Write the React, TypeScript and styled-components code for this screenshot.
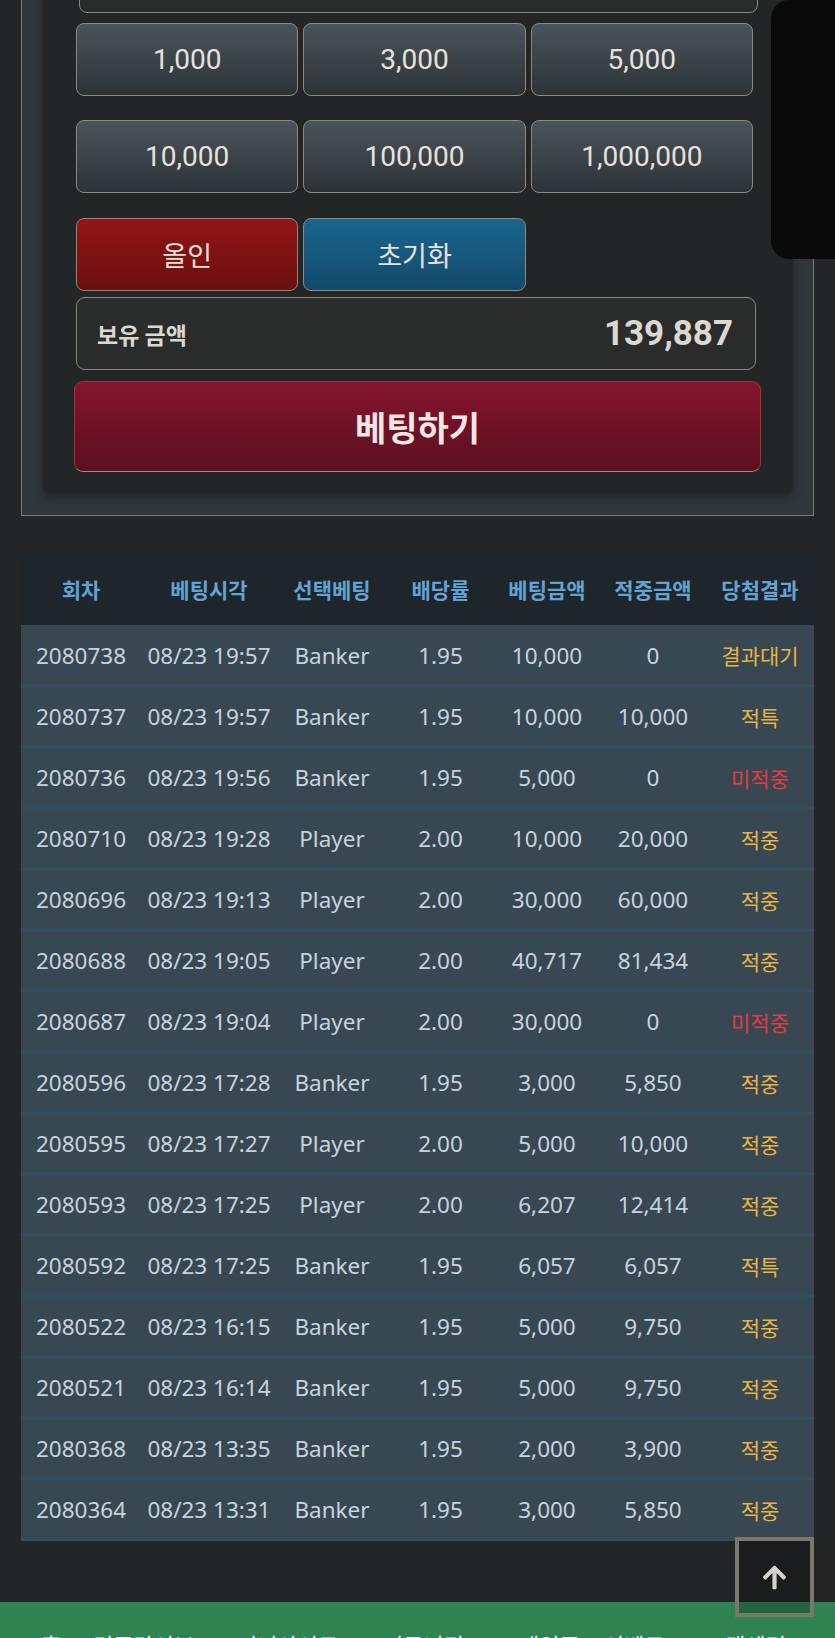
import React from "react";
import styled, { createGlobalStyle } from "styled-components";
import { FaArrowUp } from "react-icons/fa";

const GlobalStyle = createGlobalStyle`
  html, body {
    margin: 0;
    padding: 0;
    background: #232526;
  }
  * {
    box-sizing: border-box;
  }
`;

const Viewport = styled.div`
  position: relative;
  width: 835px;
  height: 1638px;
  overflow: hidden;
  background: #232526;
  font-family: "Roboto", "Noto Sans CJK KR", sans-serif;
`;

const Page = styled.div`
  margin-top: -86px;
  display: flex;
  flex-direction: column;
`;

const Frame = styled.section`
  margin-left: 21px;
  width: 793px;
  border: 1.5px solid #7f7b72;
  background: #30373a;
  padding: 21px 20px 22px 21px;
`;

const Panel = styled.div`
  background: #232627;
  border-radius: 6px;
  box-shadow: 0 4px 10px rgba(0, 0, 0, 0.35);
  padding: 21px 37px 21px 33px;
  display: flex;
  flex-direction: column;
`;

const AmountInput = styled.div`
  margin-left: 3px;
  width: 679px;
  height: 56px;
  border: 1.5px solid #8d877b;
  border-radius: 8px;
  background: #282a2b;
`;

const ChipGrid = styled.div<{ $mt: number }>`
  margin-top: ${(p) => p.$mt}px;
  width: 677px;
  display: grid;
  grid-template-columns: repeat(3, 1fr);
  column-gap: 5px;
  row-gap: 24px;
`;

const tones = {
  grey: "linear-gradient(180deg, #4a545b 0%, #2c3337 100%)",
  red: "linear-gradient(180deg, #921515 0%, #6c0f0f 100%)",
  blue: "linear-gradient(180deg, #1b658e 0%, #124a6b 100%)",
};

const ChipButton = styled.button<{ $tone: keyof typeof tones }>`
  height: 73px;
  border: 1.5px solid #8f897c;
  border-radius: 8px;
  background: ${(p) => tones[p.$tone]};
  color: #e6e2da;
  font-family: "Roboto", "Noto Sans CJK KR", sans-serif;
  font-size: ${(p) => (p.$tone === "grey" ? 28 : 27)}px;
  font-weight: 400;
  display: flex;
  align-items: center;
  justify-content: center;
  padding: 0;
`;

const BalanceBox = styled.div`
  margin-top: 6px;
  width: 680px;
  height: 73px;
  border: 1.5px solid #8d877b;
  border-radius: 9px;
  background: #2a2c2c;
  display: flex;
  align-items: center;
  justify-content: space-between;
  padding: 0 22px 0 20px;
  color: #ddd8cf;
`;

const BalanceLabel = styled.span`
  font-family: "Noto Sans CJK KR", sans-serif;
  font-size: 23px;
  font-weight: 700;
`;

const BalanceValue = styled.span`
  font-family: "Roboto", sans-serif;
  font-size: 35px;
  font-weight: 700;
`;

const BetButton = styled.button`
  margin-top: 11px;
  margin-left: -2px;
  width: 687px;
  height: 91px;
  border: 1.5px solid #a23036;
  border-bottom-color: #a08a84;
  border-radius: 9px;
  background: linear-gradient(180deg, #86142d 0%, #5b0f1f 100%);
  color: #f0e6e6;
  font-family: "Noto Sans CJK KR", sans-serif;
  font-size: 34px;
  font-weight: 700;
  padding: 0;
`;

const Overlay = styled.div`
  position: absolute;
  top: 0;
  right: 0;
  width: 64px;
  height: 259px;
  background: #0a0a0a;
  border-radius: 18px 0 0 18px;
`;

const HistoryTable = styled.table`
  margin: 37px 0 0 21px;
  width: 793px;
  border-collapse: collapse;
  table-layout: fixed;
  font-family: "Noto Sans", "Noto Sans CJK KR", sans-serif;
`;

const Col = styled.col<{ $w: number }>`
  width: ${(p) => p.$w}px;
`;

const HeadCell = styled.th`
  height: 72px;
  background: #1e252b;
  color: #63a3d4;
  font-family: "Noto Sans CJK KR", sans-serif;
  font-size: 21px;
  font-weight: 700;
  text-align: center;
  padding: 0;
`;

const Row = styled.tr`
  background: #384852;
  border-bottom: 2px solid #2e5265;
`;

const Cell = styled.td`
  height: 61px;
  padding: 0;
  text-align: center;
  color: #c6d3dc;
  font-size: 22.5px;
  white-space: nowrap;
`;

const resultColors = {
  wait: "#e9b444",
  hit: "#e9b444",
  miss: "#e23c3c",
};

const ResultCell = styled(Cell)<{ $kind: keyof typeof resultColors }>`
  color: ${(p) => resultColors[p.$kind]};
  font-family: "Noto Sans CJK KR", sans-serif;
  font-size: 21px;
`;

const Footer = styled.nav`
  margin-top: 61px;
  background: #2e8350;
  height: 80px;
  display: flex;
  padding: 26px 0 0 41px;
  font-family: "Noto Sans CJK KR", sans-serif;
  font-size: 22px;
  color: #e8eee9;
`;

const FooterLink = styled.span<{ $w: number }>`
  width: ${(p) => p.$w}px;
  white-space: nowrap;
`;

const TopButton = styled.button`
  position: absolute;
  right: 21px;
  bottom: 21px;
  width: 79px;
  height: 80px;
  border: 4px solid #7b776d;
  background: rgba(0, 0, 0, 0.22);
  color: #d6d2c8;
  font-size: 27px;
  display: flex;
  align-items: center;
  justify-content: center;
  padding: 0;
`;

const chips = ["1,000", "3,000", "5,000", "10,000", "100,000", "1,000,000"];

type Kind = "wait" | "hit" | "miss";

const rows: [string, string, string, string, string, string, string, Kind][] = [
  ["2080738", "08/23 19:57", "Banker", "1.95", "10,000", "0", "결과대기", "wait"],
  ["2080737", "08/23 19:57", "Banker", "1.95", "10,000", "10,000", "적특", "hit"],
  ["2080736", "08/23 19:56", "Banker", "1.95", "5,000", "0", "미적중", "miss"],
  ["2080710", "08/23 19:28", "Player", "2.00", "10,000", "20,000", "적중", "hit"],
  ["2080696", "08/23 19:13", "Player", "2.00", "30,000", "60,000", "적중", "hit"],
  ["2080688", "08/23 19:05", "Player", "2.00", "40,717", "81,434", "적중", "hit"],
  ["2080687", "08/23 19:04", "Player", "2.00", "30,000", "0", "미적중", "miss"],
  ["2080596", "08/23 17:28", "Banker", "1.95", "3,000", "5,850", "적중", "hit"],
  ["2080595", "08/23 17:27", "Player", "2.00", "5,000", "10,000", "적중", "hit"],
  ["2080593", "08/23 17:25", "Player", "2.00", "6,207", "12,414", "적중", "hit"],
  ["2080592", "08/23 17:25", "Banker", "1.95", "6,057", "6,057", "적특", "hit"],
  ["2080522", "08/23 16:15", "Banker", "1.95", "5,000", "9,750", "적중", "hit"],
  ["2080521", "08/23 16:14", "Banker", "1.95", "5,000", "9,750", "적중", "hit"],
  ["2080368", "08/23 13:35", "Banker", "1.95", "2,000", "3,900", "적중", "hit"],
  ["2080364", "08/23 13:31", "Banker", "1.95", "3,000", "5,850", "적중", "hit"],
];

const headers = ["회차", "베팅시각", "선택베팅", "배당률", "베팅금액", "적중금액", "당첨결과"];
const colWidths = [120, 136, 110, 107, 106, 106, 108];

const footerLinks: [string, number][] = [
  ["홈", 52],
  ["경주라이브", 144],
  ["미니사이트", 146],
  ["커뮤니티", 136],
  ["게임존", 85],
  ["이벤트", 101],
  ["고객센터", 100],
];

export default function App() {
  return (
    <Viewport>
      <GlobalStyle />
      <Page>
        <Frame>
          <Panel>
            <AmountInput />
            <ChipGrid $mt={10}>
              {chips.map((c) => (
                <ChipButton key={c} $tone="grey">
                  {c}
                </ChipButton>
              ))}
            </ChipGrid>
            <ChipGrid $mt={25}>
              <ChipButton $tone="red">올인</ChipButton>
              <ChipButton $tone="blue">초기화</ChipButton>
            </ChipGrid>
            <BalanceBox>
              <BalanceLabel>보유 금액</BalanceLabel>
              <BalanceValue>139,887</BalanceValue>
            </BalanceBox>
            <BetButton>베팅하기</BetButton>
          </Panel>
        </Frame>

        <HistoryTable>
          <colgroup>
            {colWidths.map((w, i) => (
              <Col key={i} $w={w} />
            ))}
          </colgroup>
          <thead>
            <tr>
              {headers.map((h) => (
                <HeadCell key={h}>{h}</HeadCell>
              ))}
            </tr>
          </thead>
          <tbody>
            {rows.map((r) => (
              <Row key={r[0]}>
                {r.slice(0, 6).map((v, i) => (
                  <Cell key={i}>{v}</Cell>
                ))}
                <ResultCell $kind={r[7]}>{r[6]}</ResultCell>
              </Row>
            ))}
          </tbody>
        </HistoryTable>

        <Footer>
          {footerLinks.map(([t, w]) => (
            <FooterLink key={t} $w={w}>
              {t}
            </FooterLink>
          ))}
        </Footer>
      </Page>
      <Overlay />
      <TopButton>
        <FaArrowUp />
      </TopButton>
    </Viewport>
  );
}
